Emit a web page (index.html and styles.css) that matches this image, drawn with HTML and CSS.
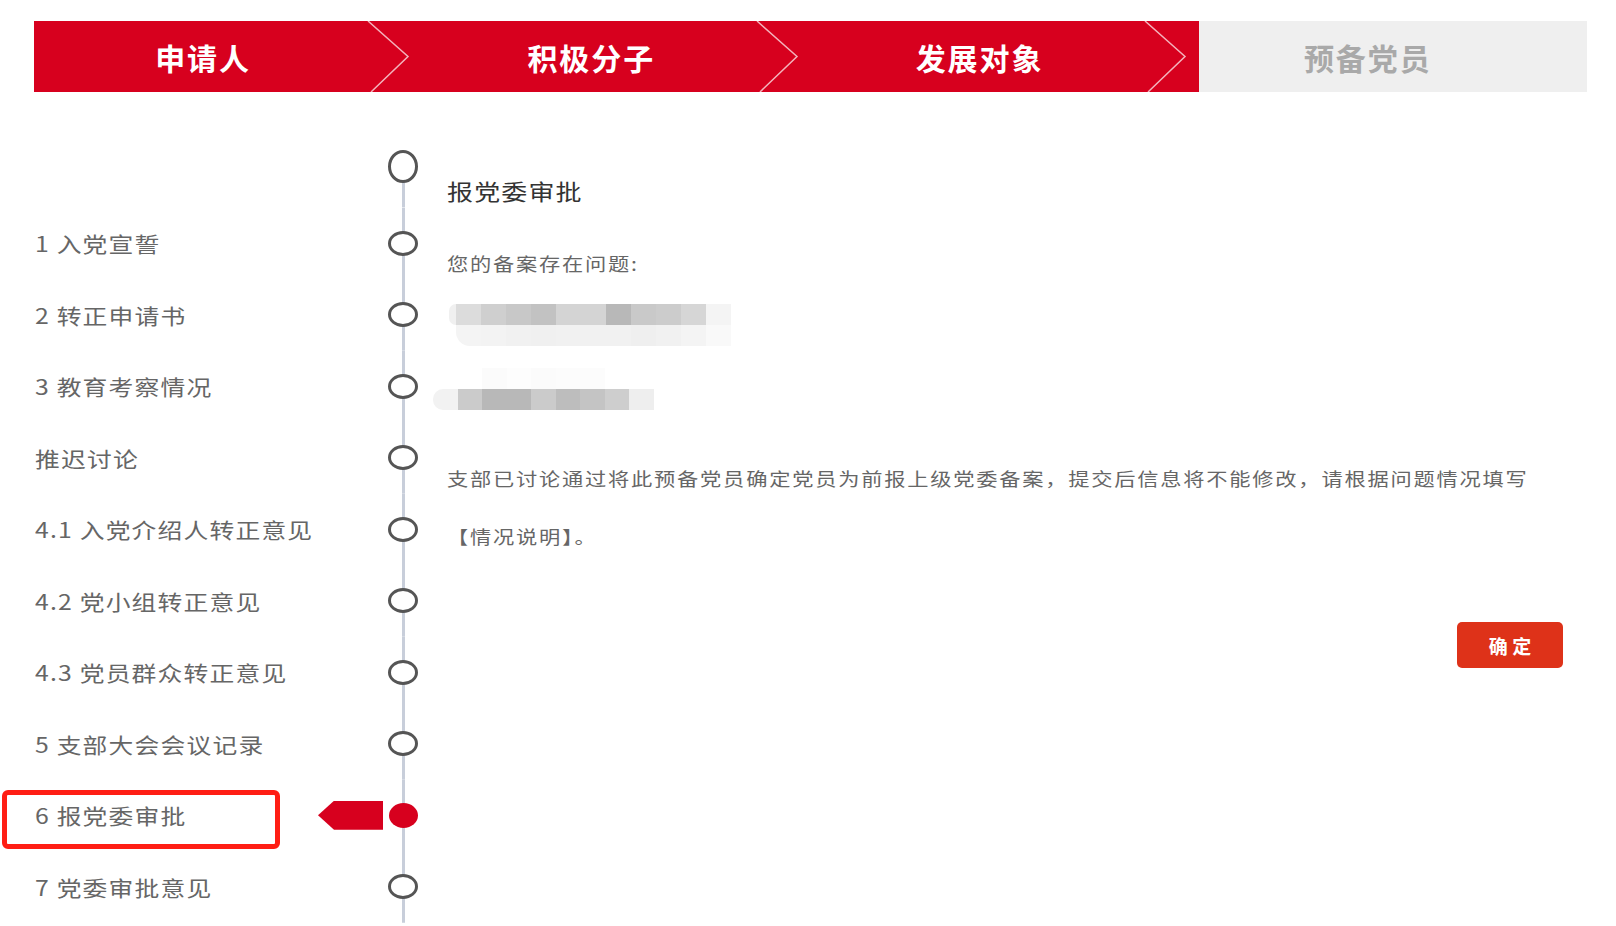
FILE: index.html
```html
<!DOCTYPE html>
<html lang="zh-CN">
<head>
    <meta charset="UTF-8">
    <meta name="viewport" content="width=device-width, initial-scale=1.0">
    <title>报党委审批</title>
    <link rel="stylesheet" href="styles.css">
</head>
<body>

    <!-- top progress bar -->
    <div class="steps">
        <div class="step done">
            <span class="step-name">申请人</span>
            <svg class="chev" width="44" height="71" viewBox="0 0 44 71"><polyline points="1,0 41,35.5 4,71"/></svg>
        </div>
        <div class="step done">
            <span class="step-name">积极分子</span>
            <svg class="chev" width="44" height="71" viewBox="0 0 44 71"><polyline points="1,0 41,35.5 4,71"/></svg>
        </div>
        <div class="step done">
            <span class="step-name">发展对象</span>
            <svg class="chev" width="44" height="71" viewBox="0 0 44 71"><polyline points="1,0 41,35.5 4,71"/></svg>
        </div>
        <div class="step todo">
            <span class="step-name">预备党员</span>
        </div>
    </div>

    <div class="main">
        <div class="timeline">
            <div class="tl-row head">
                <div class="tl-label"></div>
                <div class="tl-node"><span class="dot big"></span></div>
            </div>
            <div class="tl-row">
                <div class="tl-label"><span class="txt">1 入党宣誓</span></div>
                <div class="tl-node"><span class="dot"></span></div>
            </div>
            <div class="tl-row">
                <div class="tl-label"><span class="txt">2 转正申请书</span></div>
                <div class="tl-node"><span class="dot"></span></div>
            </div>
            <div class="tl-row">
                <div class="tl-label"><span class="txt">3 教育考察情况</span></div>
                <div class="tl-node"><span class="dot"></span></div>
            </div>
            <div class="tl-row">
                <div class="tl-label"><span class="txt">推迟讨论</span></div>
                <div class="tl-node"><span class="dot"></span></div>
            </div>
            <div class="tl-row">
                <div class="tl-label"><span class="txt">4.1 入党介绍人转正意见</span></div>
                <div class="tl-node"><span class="dot"></span></div>
            </div>
            <div class="tl-row">
                <div class="tl-label"><span class="txt">4.2 党小组转正意见</span></div>
                <div class="tl-node"><span class="dot"></span></div>
            </div>
            <div class="tl-row">
                <div class="tl-label"><span class="txt">4.3 党员群众转正意见</span></div>
                <div class="tl-node"><span class="dot"></span></div>
            </div>
            <div class="tl-row">
                <div class="tl-label"><span class="txt">5 支部大会会议记录</span></div>
                <div class="tl-node"><span class="dot"></span></div>
            </div>
            <div class="tl-row current">
                <div class="tl-label">
                    <span class="txt">6 报党委审批</span>
                    <span class="pointer"></span>
                </div>
                <div class="tl-node"><span class="dot active"></span></div>
            </div>
            <div class="tl-row">
                <div class="tl-label"><span class="txt">7 党委审批意见</span></div>
                <div class="tl-node"><span class="dot"></span></div>
            </div>
        </div>

        <div class="content">
            <div class="title"><span class="txt">报党委审批</span></div>
            <div class="sub"><span class="txt">您的备案存在问题:</span></div>

            <!-- blurred (mosaic) answer text -->
            <div class="mosaic m1">
                <div class="mrow">
                    <span class="cell edge s-f0"></span>
                    <span class="cell s-dc"></span><span class="cell s-cf"></span><span class="cell s-c8"></span>
                    <span class="cell s-c2"></span><span class="cell s-d4"></span><span class="cell s-d4"></span>
                    <span class="cell s-b8"></span><span class="cell s-c9"></span><span class="cell s-cc"></span>
                    <span class="cell s-d6"></span><span class="cell s-f4"></span>
                </div>
                <div class="mrow">
                    <span class="cell edge s-ff"></span>
                    <span class="cell s-f4 rb"></span><span class="cell s-f3"></span><span class="cell s-f1"></span>
                    <span class="cell s-f0"></span><span class="cell s-f1"></span><span class="cell s-f1"></span>
                    <span class="cell s-f1"></span><span class="cell s-ef"></span><span class="cell s-f1"></span>
                    <span class="cell s-f4"></span><span class="cell s-f9"></span>
                </div>
            </div>

            <div class="mosaic m2">
                <div class="mrow">
                    <span class="cell s-ff"></span><span class="cell s-ff"></span><span class="cell s-fb"></span>
                    <span class="cell s-fd"></span><span class="cell s-fb"></span><span class="cell s-fc"></span>
                    <span class="cell s-fc"></span><span class="cell s-ff"></span><span class="cell s-ff"></span>
                </div>
                <div class="mrow">
                    <span class="cell s-f2 rl"></span><span class="cell s-cb"></span><span class="cell s-b8"></span>
                    <span class="cell s-b8"></span><span class="cell s-cb"></span><span class="cell s-bd"></span>
                    <span class="cell s-c4"></span><span class="cell s-ce"></span><span class="cell s-ee"></span>
                </div>
            </div>

            <p class="notice">支部已讨论通过将此预备党员确定党员为前报上级党委备案，提交后信息将不能修改，请根据问题情况填写<br>【情况说明】。</p>

            <div class="btn-row">
                <button class="btn-ok">确 定</button>
            </div>
        </div>
    </div>

</body>
</html>
```

FILE: styles.css
```css
body {
    margin: 0;
    font-family: "Noto Sans CJK SC", "Noto Sans", sans-serif;
    background-color: #fff;
    overflow: hidden;
}

/* the screen text is drawn a little wide */
.txt {
    display: inline-block;
    transform: scaleX(1.18);
    transform-origin: left center;
    white-space: nowrap;
}

/* progress steps */
.steps {
    display: flex;
    height: 71px;
    margin: 21px 29px 0 34px;
}
.step {
    position: relative;
    flex: 1;
    display: flex;
    align-items: center;
    justify-content: center;
    padding-right: 50px;
    font-size: 30px;
    font-weight: 700;
    letter-spacing: 2px;
}
.step.done {
    background-color: #d7001e;
    color: #fff;
}
.step.todo {
    background-color: #efefef;
    color: #a9a9a9;
}
.chev {
    position: absolute;
    right: 11px;
    top: 0;
}
.chev polyline {
    fill: none;
    stroke: rgba(255, 255, 255, 0.7);
    stroke-width: 1.5;
}

.main {
    display: flex;
    margin-top: 33px;
}

/* left timeline */
.timeline {
    padding-left: 35px;
    width: 383px;
}
.tl-row {
    display: flex;
    align-items: center;
    height: 71.5px;
}
.tl-row.head {
    height: 82.5px;
}
.tl-label {
    width: 348px;
    margin-right: 5px;
    font-size: 21px;
    letter-spacing: 1px;
    color: #666;
    white-space: nowrap;
}
.tl-node {
    width: 30px;
    height: 100%;
    display: flex;
    align-items: center;
    justify-content: center;
    background: linear-gradient(#c8ceda, #c8ceda) center / 3px 100% no-repeat;
}
.tl-row.head .tl-node {
    background: linear-gradient(#c8ceda, #c8ceda) center bottom / 3px 50% no-repeat;
}
.dot {
    width: 24px;
    height: 19px;
    border: 3px solid #555;
    border-radius: 50%;
    background-color: #fff;
}
.dot.big {
    width: 33px;
    height: 27px;
}
.dot.active {
    width: 29px;
    height: 25px;
    border: none;
    background-color: #d7001e;
}

.tl-row.current .tl-label {
    position: relative;
    display: flex;
    align-items: center;
    justify-content: space-between;
}
/* red highlight frame round the current item */
.tl-row.current .tl-label::before {
    content: "";
    position: absolute;
    left: -33px;
    top: -10px;
    width: 268px;
    height: 49px;
    border: 5px solid #ff1e14;
    border-radius: 6px;
}
.pointer {
    width: 65px;
    height: 29px;
    background-color: #d7001e;
    clip-path: polygon(16px 0, 100% 0, 100% 100%, 16px 100%, 0 50%);
}

/* right content */
.content {
    flex: 1;
    margin-left: 29px;
    padding: 50px 53px 0 0;
}
.title {
    font-size: 22px;
    line-height: 30px;
    letter-spacing: 1px;
    color: #333;
}
.sub {
    margin-top: 43px;
    font-size: 18px;
    line-height: 30px;
    letter-spacing: 1.5px;
    color: #666;
}
.mosaic {
    display: flex;
    flex-direction: column;
}
.m1 {
    margin: 26px 0 0 2px;
}
.m2 {
    margin: 22px 0 0 -14px;
}
.mrow {
    display: flex;
}
.cell {
    width: 25px;
    height: 21px;
}
.m2 .cell {
    width: 24.5px;
}
.cell.edge {
    width: 7px;
    border-radius: 8px 0 0 8px;
}
.cell.rb {
    border-bottom-left-radius: 14px;
}
.cell.rl {
    border-radius: 10px 0 0 10px;
}
.s-b8 { background-color: #b8b8b8; }
.s-bd { background-color: #bdbdbd; }
.s-c2 { background-color: #c2c2c2; }
.s-c4 { background-color: #c4c4c4; }
.s-c8 { background-color: #c8c8c8; }
.s-c9 { background-color: #c9c9c9; }
.s-cb { background-color: #cbcbcb; }
.s-cc { background-color: #cccccc; }
.s-ce { background-color: #cecece; }
.s-cf { background-color: #cfcfcf; }
.s-d4 { background-color: #d4d4d4; }
.s-d6 { background-color: #d6d6d6; }
.s-dc { background-color: #dcdcdc; }
.s-ee { background-color: #eeeeee; }
.s-ef { background-color: #efefef; }
.s-f0 { background-color: #f0f0f0; }
.s-f1 { background-color: #f1f1f1; }
.s-f2 { background-color: #f2f2f2; }
.s-f3 { background-color: #f3f3f3; }
.s-f4 { background-color: #f4f4f4; }
.s-f9 { background-color: #f9f9f9; }
.s-fb { background-color: #fbfbfb; }
.s-fc { background-color: #fcfcfc; }
.s-fd { background-color: #fdfdfd; }
.s-ff { background-color: #ffffff; }

.notice {
    width: 940px;
    margin: 39px 0 0;
    font-size: 18px;
    line-height: 58px;
    letter-spacing: 1.5px;
    color: #666;
    transform: scaleX(1.18);
    transform-origin: left center;
    white-space: nowrap;
}
.btn-row {
    display: flex;
    justify-content: flex-end;
    margin-top: 57px;
}
.btn-ok {
    width: 106px;
    height: 46px;
    background-color: #de3219;
    color: #fff;
    font-family: inherit;
    font-size: 19px;
    font-weight: 700;
    border: none;
    border-radius: 5px;
    cursor: pointer;
}
.btn-ok:hover {
    background-color: #c42a12;
}
```
